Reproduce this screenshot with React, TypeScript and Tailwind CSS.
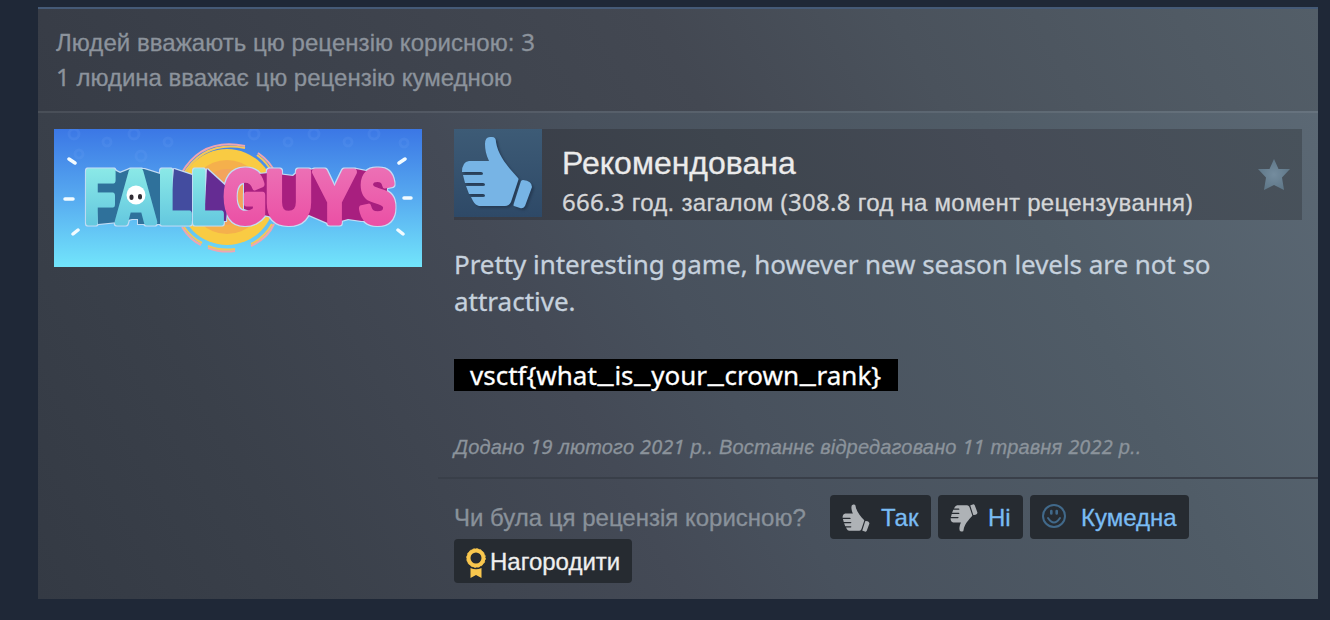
import React from "react";

const LATIN = "font-['Noto_Sans',sans-serif]";

function Thumb({ className }: { className: string }) {
  return (
    <svg viewBox="7 7 72 73" className={className} fill="currentColor">
      <path d="M15 32H35C32 26 31 20 31 15Q31 8 36 8H38Q42 8 42 13C44 27 55 39 64 49Q65 50 64 52L57 73Q55 77 51 77H25Q21 76 19 72L17 68H29Q31 68 31 66.500Q31 65 29 65H15L12 57H29Q31 57 31 55.500Q31 54 29 54H11L9 46H27Q29 46 29 44.500Q29 43 27 43H8Q8 33 15 32Z" />
      <path d="M69 51Q78 52 78 58L71 77Q69 80 66 79L60 77Q59 77 60 74L67 52Q68 51 69 51Z" />
    </svg>
  );
}

function Smile() {
  return (
    <svg viewBox="0 0 24 24" className="size-6 text-[#41698a]" fill="none" stroke="currentColor" strokeWidth="2">
      <circle cx="12" cy="12" r="11" />
      <path d="M6 14Q12 23 18 14" strokeLinecap="round" />
      <path d="M9.300 7V9.500M14.700 7V9.500" strokeWidth="2.600" strokeLinecap="round" />
    </svg>
  );
}

function Ribbon() {
  return (
    <svg viewBox="0 0 20 30" className="h-[30px] w-5" fill="#f9c74e">
      <circle cx="10" cy="10" r="7.500" fill="none" stroke="#f9c74e" strokeWidth="4" />
      <circle cx="10" cy="10" r="9.400" fill="none" stroke="#f9c74e" strokeWidth=".8" strokeDasharray="2 1.700" />
      <path d="M4.500 20Q10 22.500 15.500 20V30L10 27L4.500 30Z" />
    </svg>
  );
}

const letters = [
  { c: "F", x: 31, w: 30, f: "url(#teal)" },
  { c: "A", x: 62, w: 40, f: "url(#teal)" },
  { c: "L", x: 105, w: 32, f: "url(#teal)" },
  { c: "L", x: 138, w: 31, f: "url(#teal)" },
  { c: "G", x: 170, w: 42, f: "url(#pink)" },
  { c: "U", x: 212, w: 46, f: "url(#pink)" },
  { c: "Y", x: 260, w: 41, f: "url(#pink)" },
  { c: "S", x: 306, w: 35, f: "url(#pink)" },
];

function Letters() {
  return (
    <g fontFamily="'Liberation Sans', Arial, sans-serif" fontWeight="700" fontSize="73" strokeLinejoin="round">
      {letters.map((l, i) => (
        <text key={i} x={l.x} y="92.500" textLength={l.w} lengthAdjust="spacingAndGlyphs" fill={l.f} stroke={l.f} strokeWidth="7">
          {l.c}
        </text>
      ))}
    </g>
  );
}

function Capsule() {
  return (
    <svg viewBox="0 0 368 138" className="h-[138px] w-[368px] [-webkit-text-stroke:0]">
      <defs>
        <linearGradient id="sky" x2="0" y2="1">
          <stop offset="0" stopColor="#3b77e5" />
          <stop offset=".5" stopColor="#57aaf0" />
          <stop offset="1" stopColor="#72e5fb" />
        </linearGradient>
        <linearGradient id="teal" x1="0" y1="39" x2="0" y2="96" gradientUnits="userSpaceOnUse">
          <stop offset="0" stopColor="#8be9e7" />
          <stop offset="1" stopColor="#64c8df" />
        </linearGradient>
        <linearGradient id="pink" x1="0" y1="39" x2="0" y2="96" gradientUnits="userSpaceOnUse">
          <stop offset="0" stopColor="#ec70b5" />
          <stop offset="1" stopColor="#eb50a5" />
        </linearGradient>
        <filter id="rim" x="-5%" y="-10%" width="110%" height="120%" colorInterpolationFilters="sRGB">
          <feMorphology in="SourceAlpha" operator="dilate" radius="1" result="fat" />
          <feGaussianBlur in="fat" stdDeviation=".5" result="soft" />
          <feFlood floodColor="#c3dcf5" />
          <feComposite in2="soft" operator="in" result="edge" />
          <feMerge>
            <feMergeNode in="edge" />
            <feMergeNode in="SourceGraphic" />
          </feMerge>
        </filter>
      </defs>
      <rect width="368" height="138" fill="url(#sky)" />
      <g fill="none" stroke="#76a8f5" strokeOpacity=".14" strokeWidth="3">
        <circle cx="20" cy="5" r="5" /><circle cx="53" cy="13" r="4" /><circle cx="80" cy="5" r="5" />
        <circle cx="114" cy="13" r="4" /><circle cx="200" cy="5" r="5" /><circle cx="234" cy="13" r="4" />
        <circle cx="260" cy="5" r="5" /><circle cx="294" cy="13" r="4" /><circle cx="320" cy="5" r="5" />
        <circle cx="350" cy="14" r="4" /><circle cx="25" cy="25" r="4" /><circle cx="87" cy="27" r="5" />
      </g>
      <circle cx="173" cy="68" r="48" fill="#f9cb43" />
      <circle cx="173" cy="68" r="37" fill="#f5b04c" />
      <circle cx="173" cy="68" r="28" fill="#f3a45c" />
      <g fill="none" strokeWidth="2">
        <path d="M127 45Q148 8 191 17M204 24Q217 33 221 44M128 98Q136 111 147 116M154 119Q167 124 181 122M197 117Q214 109 220 95" stroke="#efa5b2" />
        <path d="M129 46Q150 11 191 19M203 26Q214 34 219 45M130 98Q138 109 148 114M154 117Q167 122 181 120M197 115Q211 108 218 95" stroke="#f5c65a" />
      </g>
      <g stroke="#f2fbff" strokeWidth="3.500" strokeLinecap="round">
        <path d="M15 30L21 34M11 70H19M19 105L24 101M345 34L351 30M350 69H357M344 101L349 105" />
      </g>
      <g filter="url(#rim)">
        <path d="M40 42L58 40L66 44L76 40L90 40L106 45V95H84V90H78L64 93L44 95Z" fill="#2f719b" />
        <path d="M120 40L138 46V92H115Z" fill="#434c9f" />
        <path d="M153 40L175 60L172 92H150Z" fill="#652c93" />
        <path d="M195 46L215 44L239 47L245 42L262 40L281 58L302 40L312 42L334 50L330 90L308 92L294 90L276 95L255 86L228 90L205 85L190 80V50Z" fill="#a81f7f" />
        <Letters />
      </g>
      <circle cx="82" cy="66" r="9.500" fill="#fff" />
      <path d="M77.500 67.500V69M86 67V68.500" stroke="#302d34" strokeWidth="4" strokeLinecap="round" />
    </svg>
  );
}

function VoteButton({ icon, label, className }: { icon: React.ReactNode; label: string; className: string }) {
  return (
    <button className={`flex h-11 items-start rounded-[4px] bg-[#262b31] pl-3 pt-[9px] text-2xl leading-7 text-[#7abcf3] ${className}`}>
      {icon}
      <span className="whitespace-nowrap">{label}</span>
    </button>
  );
}

const flag = ["vsctf{what", "is", "your", "crown", "rank}"];

export default function App() {
  return (
    <div className="h-[620px] w-[1330px] overflow-hidden bg-[#1f2837] pl-[38px] pr-3 pt-[7px] font-['Liberation_Sans',Arial,sans-serif] [-webkit-text-stroke:0.3px]">
      <article className="h-[592px] border-t-2 border-[#455a77]">
        <header className="h-[102px] bg-[linear-gradient(61deg,#373c46_0%,#434852_50%,#4a525c_68%,#535e68_100%)] pl-[18px] pt-[15px] text-2xl leading-[35px] text-[#8c939c]">
          <p className="whitespace-nowrap tracking-[0.05px]">
            Людей вважають цю рецензію корисною: <span className={LATIN}>3</span>
          </p>
          <p className="-mt-px whitespace-nowrap">
            <span className={LATIN}>1</span> людина вважає цю рецензію кумедною
          </p>
        </header>
        <div className="flex h-[488px] border-t-2 border-white/8 bg-[linear-gradient(61deg,#343a44_0%,#3a404a_18%,#444a56_42%,#48515d_52%,#505c67_78%,#5b6874_100%)] bg-origin-border">
          <div className="w-[400px] shrink-0 pl-4 pt-4">
            <Capsule />
          </div>
          <div className="grow pt-4">
            <div className="ml-4 mr-4 flex h-[91px] bg-[linear-gradient(61deg,#383c46_0%,#3e454e_35%,#454b56_65%,#48525b_100%)]">
              <div className="size-[88px] shrink-0 bg-linear-to-b from-[#3d5b76] to-[#2e4967]">
                <Thumb className="ml-[7px] mt-[7px] h-[73px] w-[72px] text-[#77b4e5] drop-shadow-[2px_2px_1px_#263b54]" />
              </div>
              <div className="grow pl-5">
                <h1 className="mt-[15px] text-[32px] leading-[38px] text-[#ebebeb]">Рекомендована</h1>
                <p className="whitespace-nowrap text-2xl leading-[40px] tracking-[0.28px] text-[#d5d6d8]">
                  <span className={LATIN}>666.3</span> год. загалом <span className={LATIN}>(308.8</span> год на момент рецензування<span className={LATIN}>)</span>
                </p>
              </div>
              <svg viewBox="0 0 32 31" className="mr-3 mt-[30px] h-[31px] w-8 shrink-0">
                <defs>
                  <radialGradient id="star">
                    <stop offset="0" stopColor="#748c9e" />
                    <stop offset="1" stopColor="#607889" />
                  </radialGradient>
                </defs>
                <path d="M16 0L20.500 10H32L24 18.500L26 31L16 26L6 31L8 18.500L0 10H11.500Z" fill="url(#star)" />
              </svg>
            </div>
            <div className="ml-4 pt-[26px] font-['Noto_Sans',sans-serif] text-[26px] leading-[37px] text-[#c6d1dd]">
              <p className="whitespace-nowrap tracking-[-0.06px]">Pretty interesting game, however new season levels are not so</p>
              <p>attractive.</p>
              <p className="mt-[39px] h-8 w-[444px] whitespace-nowrap bg-black pl-4 leading-8 text-white">
                {flag.map((part, i) => (
                  <React.Fragment key={part}>
                    {i > 0 && (
                      <span className="relative -top-[5px] mx-px font-['Liberation_Sans',Arial,sans-serif] text-[28px] leading-none">_</span>
                    )}
                    {part}
                  </React.Fragment>
                ))}
              </p>
            </div>
            <p className="ml-4 mt-[42px] whitespace-nowrap text-[20px] italic leading-7 tracking-[0.18px] text-[#8b939b]">
              Додано <span className={LATIN}>19</span> лютого <span className={LATIN}>2021</span> р.. Востаннє відредаговано <span className={LATIN}>11</span> травня <span className={LATIN}>2022</span> р..
            </p>
            <div className="mt-4 border-t-2 border-[#393f49] pl-4 pt-4">
              <div className="flex h-11">
                <p className="w-[376px] whitespace-nowrap text-2xl leading-[45px] text-[#89919a]">Чи була ця рецензія корисною?</p>
                <div className="flex gap-[7px]">
                  <VoteButton className="w-[101px] gap-[11px]" icon={<Thumb className="size-7 text-[#aeb2b6]" />} label="Так" />
                  <VoteButton className="w-[85px] gap-[10px]" icon={<Thumb className="size-7 -scale-y-100 text-[#aeb2b6]" />} label="Ні" />
                  <VoteButton className="w-[159px] gap-[15px]" icon={<Smile />} label="Кумедна" />
                </div>
              </div>
              <button className="flex h-11 w-[178px] items-start gap-1 rounded-[4px] bg-[#262b31] pl-3 pt-[9px] text-2xl leading-7 text-[#efefef]">
                <Ribbon />
                <span>Нагородити</span>
              </button>
            </div>
          </div>
        </div>
      </article>
    </div>
  );
}
